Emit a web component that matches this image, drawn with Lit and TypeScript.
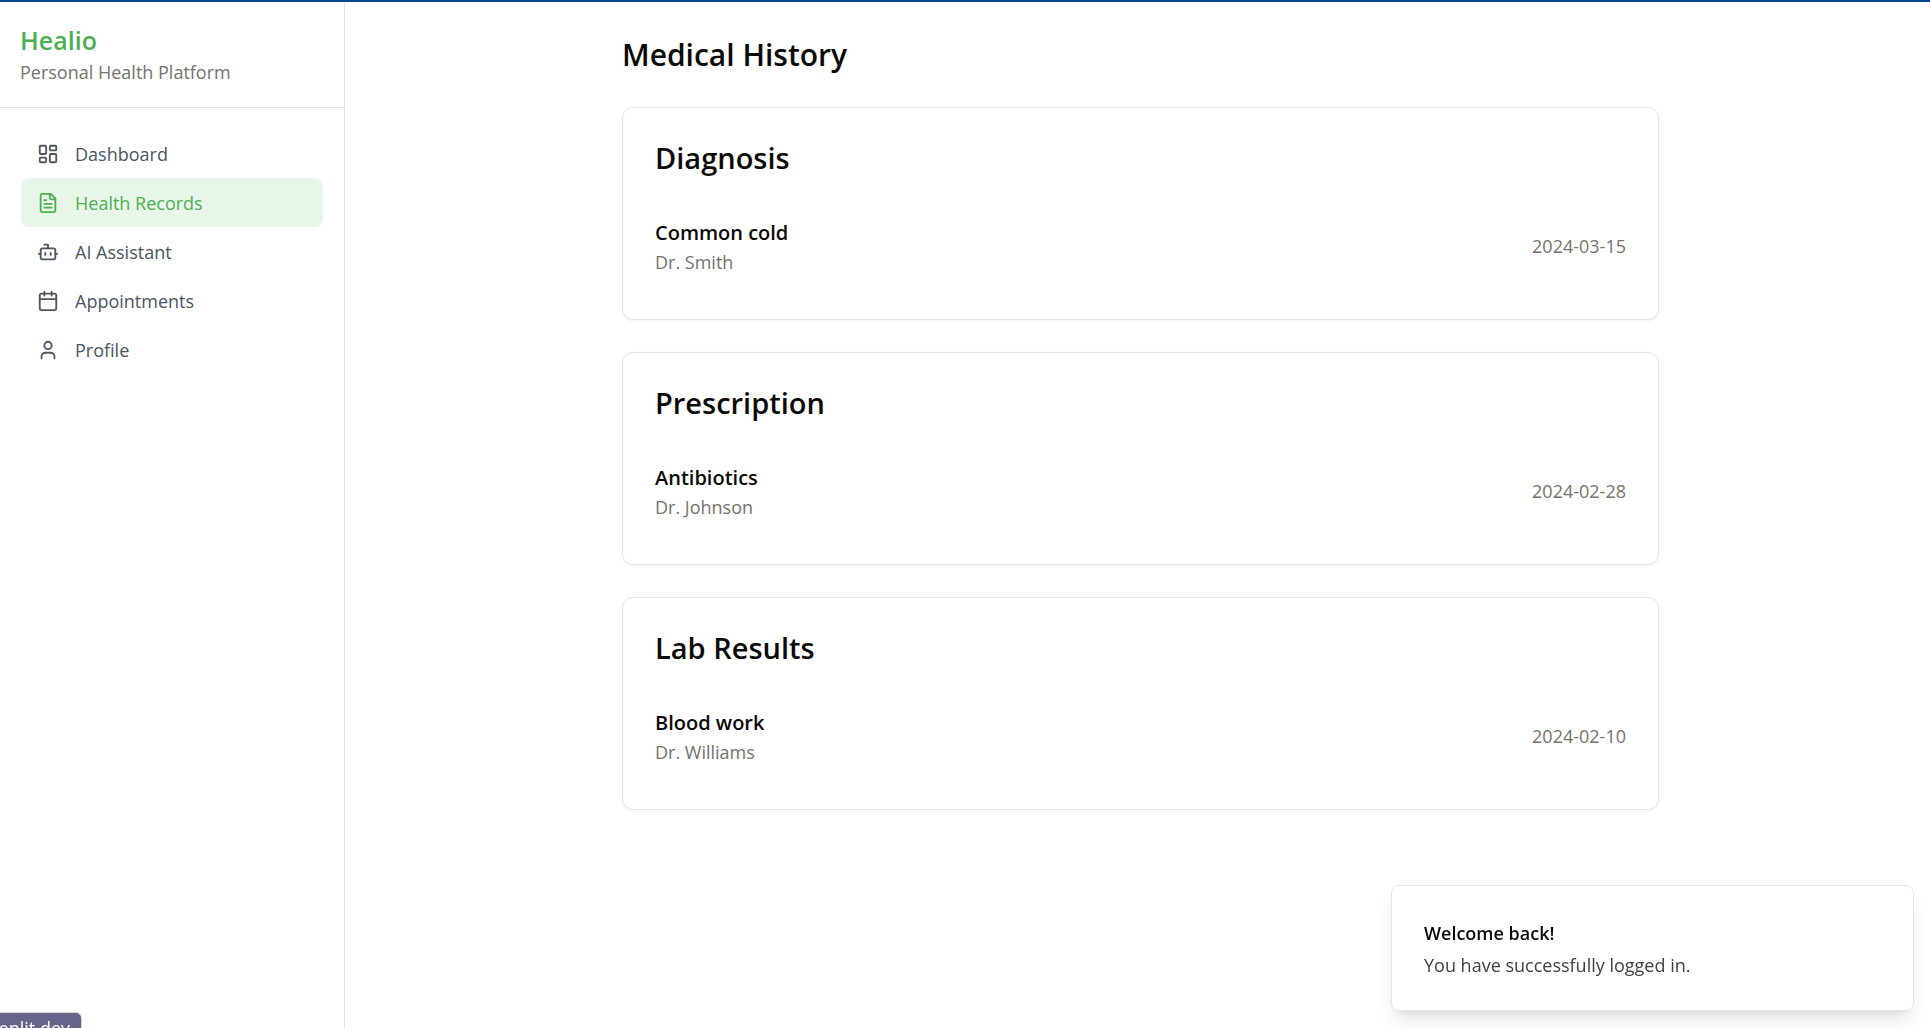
import { LitElement, html, css, svg, type SVGTemplateResult } from "lit";
import { customElement, property } from "lit/decorators.js";
import { classMap } from "lit/directives/class-map.js";

const icons: Record<string, SVGTemplateResult> = {
  dashboard: svg`<rect width="7" height="9" x="3" y="3" rx="1"/><rect width="7" height="5" x="14" y="3" rx="1"/><rect width="7" height="9" x="14" y="12" rx="1"/><rect width="7" height="5" x="3" y="16" rx="1"/>`,
  records: svg`<path d="M15 2H6a2 2 0 0 0-2 2v16a2 2 0 0 0 2 2h12a2 2 0 0 0 2-2V7Z"/><path d="M14 2v4a2 2 0 0 0 2 2h4"/><path d="M10 9H8"/><path d="M16 13H8"/><path d="M16 17H8"/>`,
  bot: svg`<path d="M12 8V4H8"/><rect width="16" height="12" x="4" y="8" rx="2"/><path d="M2 14h2"/><path d="M20 14h2"/><path d="M15 13v2"/><path d="M9 13v2"/>`,
  calendar: svg`<path d="M8 2v4"/><path d="M16 2v4"/><rect width="18" height="18" x="3" y="4" rx="2"/><path d="M3 10h18"/>`,
  user: svg`<path d="M19 21v-2a4 4 0 0 0-4-4H9a4 4 0 0 0-4 4v2"/><circle cx="12" cy="7" r="4"/>`,
};

const navItems = [
  { label: "Dashboard", icon: "dashboard" },
  { label: "Health Records", icon: "records", active: true },
  { label: "AI Assistant", icon: "bot" },
  { label: "Appointments", icon: "calendar" },
  { label: "Profile", icon: "user" },
];

const records = [
  { kind: "Diagnosis", name: "Common cold", doctor: "Dr. Smith", date: "2024-03-15" },
  { kind: "Prescription", name: "Antibiotics", doctor: "Dr. Johnson", date: "2024-02-28" },
  { kind: "Lab Results", name: "Blood work", doctor: "Dr. Williams", date: "2024-02-10" },
];

@customElement("record-card")
class RecordCard extends LitElement {
  @property() kind = "";
  @property() name = "";
  @property() doctor = "";
  @property() date = "";

  static styles = css`
    :host {
      display: block;
      padding: 32px;
      border: 1px solid #e5e5e5;
      border-radius: 11px;
      background: #fff;
      box-shadow: 0 1px 3px rgba(0, 0, 0, 0.06);
    }
    .kind {
      margin: 0 0 41px;
      font-size: 29px;
      line-height: 36px;
      font-weight: 600;
    }
    .row {
      display: flex;
      justify-content: space-between;
      align-items: center;
      padding-bottom: 12px;
    }
    .name,
    .doctor {
      margin: 0;
    }
    .name {
      font-size: 20px;
      line-height: 32px;
      font-weight: 600;
    }
    .doctor,
    .date {
      font-size: 18px;
      line-height: 26px;
      color: #78716c;
    }
  `;

  render() {
    return html`
      <h2 class="kind">${this.kind}</h2>
      <div class="row">
        <div>
          <p class="name">${this.name}</p>
          <p class="doctor">${this.doctor}</p>
        </div>
        <time class="date" datetime=${this.date}>${this.date}</time>
      </div>
    `;
  }
}

@customElement("app-root")
class AppRoot extends LitElement {
  static styles = css`
    :host {
      display: block;
      font-family: "Open Sans", "Noto Sans", sans-serif;
      font-size: 18px;
      line-height: 26px;
      color: #0c0a09;
    }
    * {
      box-sizing: border-box;
    }
    .page {
      display: flex;
      min-height: 100vh;
      border-top: 2px solid #004589;
      background: #fff;
    }
    .sidebar {
      flex: none;
      width: 345px;
      border-right: 1px solid #e5e5e5;
    }
    .brand {
      padding: 20px 20px 21px;
      border-bottom: 1px solid #e5e5e5;
    }
    .logo {
      margin: 0;
      font-size: 25px;
      line-height: 36px;
      font-weight: 600;
      color: #4caf50;
    }
    .tagline {
      margin: 0;
      line-height: 28px;
      color: #78716c;
    }
    .nav {
      display: flex;
      flex-direction: column;
      padding: 21px;
    }
    .link {
      display: flex;
      align-items: center;
      gap: 16px;
      height: 49px;
      padding: 0 16px;
      border-radius: 8px;
      color: #4b5563;
      text-decoration: none;
    }
    .link.active {
      background: #e8f5e9;
      color: #4caf50;
    }
    .icon {
      width: 22px;
      height: 22px;
      fill: none;
      stroke: currentColor;
      stroke-width: 2;
      stroke-linecap: round;
      stroke-linejoin: round;
    }
    .main {
      flex: 1;
      padding: 33px 32px 32px 38px;
    }
    .content {
      max-width: 1037px;
      margin: 0 auto;
    }
    .title {
      margin: 0 0 32px;
      font-size: 30px;
      line-height: 40px;
      font-weight: 600;
    }
    .cards {
      display: grid;
      gap: 32px;
    }
    .toast {
      position: fixed;
      right: 16px;
      bottom: 17px;
      width: 523px;
      padding: 34px 32px 32px;
      border: 1px solid #e5e5e5;
      border-radius: 8px;
      background: #fff;
      box-shadow: 0 13px 20px -4px rgba(0, 0, 0, 0.1), 0 5px 8px -5px rgba(0, 0, 0, 0.1);
    }
    .toast-title {
      margin: 0 0 6px;
      font-weight: 600;
    }
    .toast-text {
      margin: 0;
      color: #44403c;
    }
    .status {
      position: fixed;
      left: 0;
      bottom: 0;
      width: 82px;
      height: 16px;
      overflow: hidden;
      border: 1px solid #d6d6da;
      border-width: 1px 1px 0 0;
      border-top-right-radius: 6px;
      background: #67648a;
      color: #fff;
      font-size: 18px;
      line-height: 30px;
      display: flex;
      justify-content: flex-end;
      padding-right: 11px;
      white-space: nowrap;
    }
  `;

  render() {
    return html`
      <div class="page">
        <aside class="sidebar">
          <header class="brand">
            <h1 class="logo">Healio</h1>
            <p class="tagline">Personal Health Platform</p>
          </header>
          <nav class="nav">
            ${navItems.map(
              (item) => html`
                <a class=${classMap({ link: true, active: !!item.active })} href="#">
                  <svg class="icon" viewBox="0 0 24 24" aria-hidden="true">${icons[item.icon]}</svg>
                  <span>${item.label}</span>
                </a>
              `
            )}
          </nav>
        </aside>
        <main class="main">
          <div class="content">
            <h1 class="title">Medical History</h1>
            <div class="cards">
              ${records.map(
                (r) => html`<record-card .kind=${r.kind} .name=${r.name} .doctor=${r.doctor} .date=${r.date}></record-card>`
              )}
            </div>
          </div>
        </main>
      </div>
      <div class="toast" role="status">
        <p class="toast-title">Welcome back!</p>
        <p class="toast-text">You have successfully logged in.</p>
      </div>
      <div class="status">replit.dev</div>
    `;
  }
}
